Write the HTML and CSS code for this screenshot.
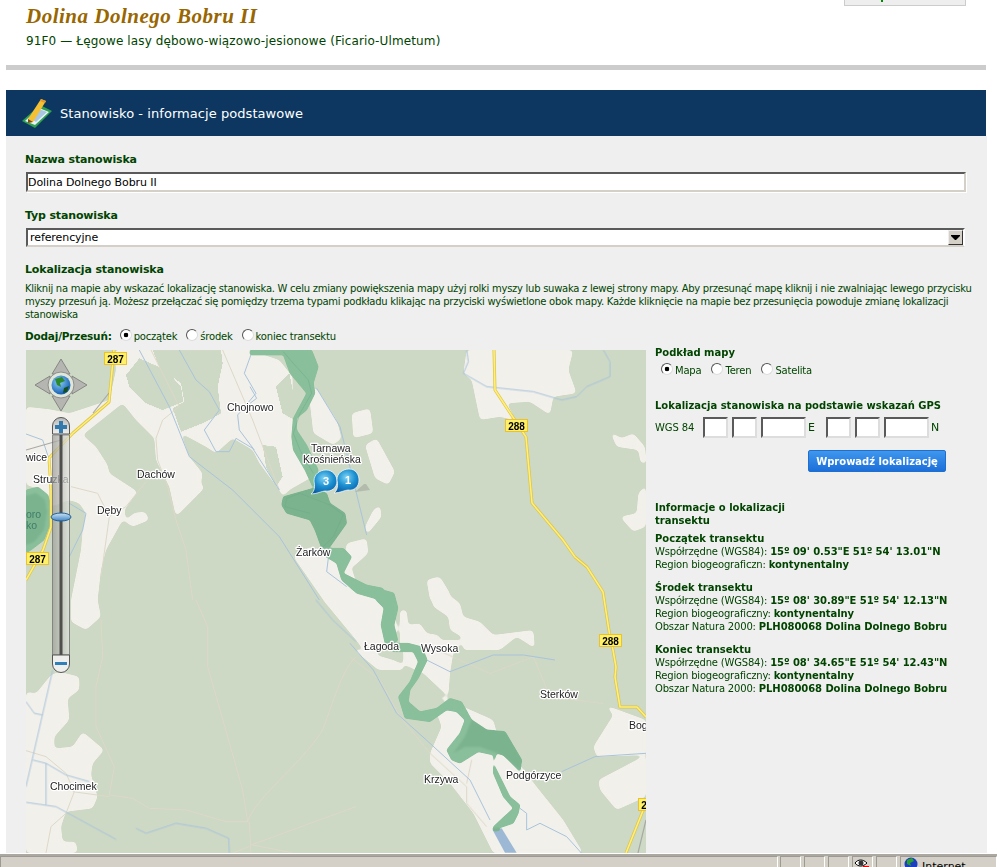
FILE: index.html
```html
<!DOCTYPE html>
<html lang="pl">
<head>
<meta charset="utf-8">
<title>Stanowisko</title>
<link rel="stylesheet" href="styles.css">
</head>
<body>
<header class="top">
  <div class="title-block">
    <h1 class="site-title">Dolina Dolnego Bobru II</h1>
    <p class="site-sub">91F0 — Łęgowe lasy dębowo-wiązowo-jesionowe (Ficario-Ulmetum)</p>
  </div>
  <div class="top-box"><span class="top-mark"></span></div>
</header>
<div class="rule"></div>
<div class="band">
  <svg class="band-icon" width="32" height="32" viewBox="0 0 32 32">
    <path d="M1 24 L19 8 L31 14 L14 31 Z" fill="#2fa04f"/>
    <path d="M4 24 L18 11 L28 15 L14 28 Z" fill="#eaf2f8"/>
    <path d="M9 21 L18 12 L26 15 L15 25 Z" fill="#a9c6e2"/>
    <path d="M7 22 L20 2 L25 4 L12 25 L7 26 Z" fill="#f5c033"/>
    <path d="M20 2 L25 4 L24 6 L19 4 Z" fill="#e59a2b"/>
    <path d="M7 22 L12 25 L7 26 Z" fill="#7b4a1f"/>
  </svg>
  <span class="band-text">Stanowisko - informacje podstawowe</span>
</div>
<main class="panel">
  <h2 class="field-label first">Nazwa stanowiska</h2>
  <input class="text-input" type="text" value="Dolina Dolnego Bobru II">
  <h2 class="field-label second">Typ stanowiska</h2>
  <div class="select-box"><span class="select-value">referencyjne</span><span class="select-btn"><svg width="9" height="5" viewBox="0 0 9 5"><path d="M0 0H9V1L5 5H4L0 1Z" fill="#000"/></svg></span></div>
  <h2 class="field-label third">Lokalizacja stanowiska</h2>
  <p class="help">Kliknij na mapie aby wskazać lokalizację stanowiska. W celu zmiany powiększenia mapy użyj rolki myszy lub suwaka z lewej strony mapy. Aby przesunąć mapę kliknij i nie zwalniając lewego przycisku<br>myszy przesuń ją. Możesz przełączać się pomiędzy trzema typami podkładu klikając na przyciski wyświetlone obok mapy. Każde kliknięcie na mapie bez przesunięcia powoduje zmianę lokalizacji<br>stanowiska</p>
  <div class="mode-row">
    <strong class="mode-label">Dodaj/Przesuń:</strong>
    <label class="opt"><input class="radio" type="radio" name="m" checked>początek</label>
    <label class="opt"><input class="radio" type="radio" name="m">środek</label>
    <label class="opt"><input class="radio" type="radio" name="m">koniec transektu</label>
  </div>
  <div class="columns">
    <svg class="map" width="620" height="503" viewBox="0 0 620 503">
      <defs>
        <filter id="smooth" x="-5%" y="-5%" width="110%" height="110%" color-interpolation-filters="sRGB">
          <feGaussianBlur stdDeviation="2"/>
          <feComponentTransfer><feFuncA type="linear" slope="8" intercept="-3.500"/></feComponentTransfer>
        </filter>
        <filter id="soft" x="-5%" y="-5%" width="110%" height="110%" color-interpolation-filters="sRGB">
          <feGaussianBlur stdDeviation=".8"/>
          <feComponentTransfer><feFuncA type="linear" slope="4" intercept="-1"/></feComponentTransfer>
        </filter>
        <radialGradient id="pin" cx="50%" cy="35%" r="65%"><stop offset="0" stop-color="#7fd4f5"/><stop offset=".55" stop-color="#1b8fd0"/><stop offset="1" stop-color="#0b5fa8"/></radialGradient>
        <radialGradient id="globe" cx="40%" cy="35%" r="70%"><stop offset="0" stop-color="#8fd0f5"/><stop offset="1" stop-color="#0c57b0"/></radialGradient>
        <linearGradient id="track" x1="0" x2="1" y1="0" y2="0"><stop offset="0" stop-color="#9c9c98"/><stop offset="1" stop-color="#dfe2dc"/></linearGradient>
        <linearGradient id="cap" x1="0" x2="0" y1="0" y2="1"><stop offset="0" stop-color="#b9bab7"/><stop offset="1" stop-color="#f0f0ee"/></linearGradient>
        <linearGradient id="handle" x1="0" x2="0" y1="0" y2="1"><stop offset="0" stop-color="#cfe3f5"/><stop offset="1" stop-color="#3f86c6"/></linearGradient>
      </defs>
      <rect class="forest" width="620" height="503"/>

      <g filter="url(#smooth)">
        <g class="light" transform="scale(.3333)">
          <path d="M0 170 70 178 130 190 190 170 250 150 270 60 265 0 670 0 760 30 800 80 800 200 800 280 840 340 860 380 790 420 770 440 760 420 700 340 680 300 620 265 570 310 540 290 465 250 490 320 530 370 525 400 535 415 450 500 430 410 390 330 385 265 330 210 290 160 170 255 210 290 245 345 250 370 335 425 295 480 300 510 325 488 358 485 370 510 320 530 290 510 240 600 225 660 215 750 225 800 180 840 135 815 135 750 165 600 170 540 180 490 160 460 130 450 75 470 50 420 0 405Z"/>
        </g>
        <g class="light" transform="translate(0,250) scale(.3333)">
          <path d="M0 275 30 280 75 225 100 215 160 230 160 270 125 295 130 360 85 410 85 445 140 440 170 395 235 450 200 490 195 525 215 590 200 625 120 635 105 680 110 725 150 725 155 759 0 759Z"/>
        </g>
        <g class="light" transform="translate(374,0) scale(.3333)">
          <path d="M200 0 190 70 215 90 240 210 300 200 340 210 340 195 320 160 390 155 450 195 460 140 530 130 505 60 520 0Z"/>
          <path d="M630 245 665 265 700 250 735 290 740 340 722 340 715 300 650 290Z"/>
          <path d="M738 405 715 430 710 490 660 500 700 545 738 530Z"/>
          <path d="M80 690 115 680 140 730 180 760 190 800 240 815 280 855 400 840 405 895 350 860 300 900 190 900 185 860 150 840 145 800 100 770Z"/>
          <path d="M0 780 20 780 25 825 60 820 80 850 115 855 140 900 0 900Z"/>
        </g>
        <g class="light" transform="translate(224,0) scale(.3333)">
          <path d="M175 120 200 115 260 210 275 265 250 285 190 250Z"/>
          <path d="M305 190 360 175 370 250 310 265Z"/>
          <path d="M345 285 380 265 435 365 415 405 375 385Z"/>
          <path d="M390 465 395 500 350 555 345 530 370 480Z"/>
          <path d="M290 580 350 565 355 610 310 650 280 640Z"/>
          <path d="M530 690 570 680 600 730 600 750 540 750Z"/>
          <path d="M130 620 180 590 300 640 320 700 420 750 220 750Z"/>
        </g>
        <g class="light">
          <path d="M297 250 364 250 372 280 345 310 330 290Z"/>
        </g>
        <g class="light" transform="translate(324,290) scale(.3333)">
          <path d="M0 20 85 90 160 90 160 20 215 0 340 0 310 40 300 100 295 170 220 100 130 60 60 40Z"/>
          <path d="M530 -10 550 25 515 -10Z"/>
          <path d="M250 170 300 170 260 220 275 260 240 340 240 370 300 430 370 520 430 640 700 640 640 540 560 440 510 375 460 350 430 240 340 200Z"/>
          <path d="M765 195 888 240 888 345 740 350 730 320 790 225Z"/>
          <path d="M888 345 745 420 750 450 800 510 888 470Z"/>
        </g>
      </g>
      <g class="forest-patch" filter="url(#smooth)" transform="scale(.3333)">
        <path d="M300 75 340 25 420 60 465 110 472 155 410 180 360 160 310 110Z"/>
        <path d="M380 0 585 0 590 40 575 110 585 190 540 215 465 245 440 175 475 155 465 100 400 50Z"/>
        <path d="M750 110 790 70 800 120 805 210 770 190Z"/>
        <path d="M710 285 750 290 770 380 750 410 720 350Z"/>
      </g>

      <g class="track" transform="translate(0,250) scale(.3333)">
        <path d="M210 260 230 170 225 60M210 260 210 380 265 500 250 585 320 595 370 625 480 630 600 665 665 665 650 570 605 410 545 200 545 80 510 0"/>
        <path d="M665 665C690 590 820 500 890 390 930 280 950 210 990 170"/>
        <path d="M670 740 620 759M675 735 990 620M680 735 800 759M670 665 675 759"/>
        <path d="M0 452 60 470 120 520 145 575 120 640 75 680 60 759M140 575 250 590"/>
      </g>
      <g class="track" transform="scale(.3333)">
        <path d="M375 0 460 170 410 210 390 265 395 330 425 410 450 510 480 600 500 750"/>
        <path d="M590 0 680 210 760 420"/>
        <path d="M135 410 215 430 250 500 225 680M360 395 300 470 250 500"/>
      </g>
      <g class="track" transform="translate(324,290) scale(.3333)">
        <path d="M0 50 90 120 150 230 240 340 350 440 350 490 410 560M240 20 420 100 550 50 600 170 760 190M365 360 350 430"/>
      </g>

      <g class="stream" transform="scale(.3333)">
        <path d="M340 0 430 170 490 320 620 420 760 560 880 750"/>
        <path d="M460 0 510 90 550 125 580 180 535 240 570 305 610 305 630 265 680 295 760 420"/>
        <path d="M680 0 655 70 690 130 635 195 640 240 685 300"/>
        <path d="M0 252 50 270 70 330M130 460 180 490 170 540 130 620"/>
      </g>
      <g class="stream" transform="translate(0,250) scale(.3333)">
        <path d="M80 210 0 560M0 305 25 340 50 345M20 480 60 490 120 525 190 545M60 490 60 615M0 607 90 620 270 718M330 685 360 700 450 670 540 685 608 715 610 759"/>
        <path d="M870 0 920 60 990 125"/>
      </g>
      <g class="stream" transform="translate(374,0) scale(.3333)">
        <path d="M200 0 205 35 190 70 260 110 400 125 485 150 530 140 560 110 630 80 630 35 610 0"/>
      </g>
      <g class="stream" transform="translate(224,0) scale(.3333)">
        <path d="M0 110 20 145 0 160M200 115 270 230 285 290 350 555"/>
        <path d="M235 625 230 665 290 710"/>
      </g>
      <g class="stream" transform="translate(324,290) scale(.3333)">
        <path d="M0 10 70 90 140 220 240 310 360 420 420 540M230 60 300 95 430 45 520 45 615 60"/>
        <path d="M635 395 735 350 888 340"/>
        <path d="M510 505 530 520 530 570 570 550 650 590 695 640"/>
      </g>

      <path class="water" transform="translate(324,290) scale(.3333)" d="M428 570 455 565 500 638 465 638Z"/>
      <g filter="url(#soft)">
        <path class="reserve" d="M0 140 12 137 22 145 26 160 25 172 18 190 5 200 0 203Z"/>
        <path class="reserve-dark" d="M0 146 10 143 19 150 21 162 18 180 8 192 0 195Z"/>
        <g class="reserve" transform="translate(224,0) scale(.3333)">
          <path d="M0 0 185 0 205 50 190 100 195 130 170 180 140 205 140 240 170 285 205 360 190 415 165 360 130 300 125 260 130 205 170 130 120 70 100 15 0 15Z"/>
          <path d="M280 595 305 620 280 670 350 705 400 715 390 750 320 730 275 690 260 640 210 610 215 595Z"/>
        </g>
        <path class="reserve" d="M350 238 368 243 372 258 368 275 372 291 359 293 355 275 358 258 350 250Z"/>
        <g class="reserve-dark" transform="translate(224,0) scale(.3333)">
          <path d="M100 440 190 415 230 430 240 460 285 490 290 520 240 590 215 595 195 540 180 510 110 490 95 465Z"/>
        </g>
        <g class="reserve" transform="translate(324,290) scale(.3333)">
          <path d="M105 0 120 10 175 10 215 20 232 60 205 115 180 150 175 185 210 215 260 205 300 175 335 185 365 240 410 270 465 275 515 360 510 395 500 385 460 345 440 340 430 370 480 470 510 495 505 520 490 550 430 570 430 560 490 505 460 470 430 400 430 345 385 335 330 370 305 360 290 330 330 280 345 240 320 215 290 210 240 245 165 235 145 170 180 125 205 65 190 35 130 35 105 20Z"/>
        </g>
        <g class="reserve-dark" transform="translate(324,290) scale(.3333)">
          <path d="M310 340 345 320 390 320 430 335 460 345 510 390 515 360 465 275 410 270 365 240 345 290Z"/>
          <path d="M428 566 446 562 450 572 430 574Z"/>
        </g>
      </g>
      <g class="reserve-line" transform="translate(224,0) scale(.3333)">
        <path d="M100 5 130 40 175 90 185 130 150 190 130 250 150 300 190 370M110 445 150 430 240 465 280 495 250 560 220 590M110 445 105 470 180 490"/>
      </g>

      <g class="road-edge"><path d="M88 0 83 52 47 83 23 108 25 140 25 177 17 200 0 230"/></g>
      <path class="grey-road" d="M83 43 67 63 M0 100 35 90"/>
      <g class="road-fill"><path d="M88 0 83 52 47 83 23 108 25 140 25 177 17 200 0 230"/></g>
      <g class="road-edge"><path d="M468 0 469 40 500 87 506 153 537 190 549 207 561 217 577 242 584 287 587 300 590 317 589 327 594 357 611 357 620 367M620 453 600 503"/></g>
      <g class="road-fill"><path d="M468 0 469 40 500 87 506 153 537 190 549 207 561 217 577 242 584 287 587 300 590 317 589 327 594 357 611 357 620 367M620 453 600 503"/></g>
      <path class="grey-road" d="M620 470 612 503"/>

      <g class="labels">
        <text x="201" y="61">Chojnowo</text>
        <text x="111" y="128">Dachów</text>
        <text x="71" y="164">Dęby</text>
        <text x="0" y="111">wice</text>
        <text x="285" y="102">Tarnawa</text>
        <text x="277" y="113">Krośnieńska</text>
        <text x="270" y="206">Żarków</text>
        <text x="338" y="300">Łagoda</text>
        <text x="395" y="302">Wysoka</text>
        <text x="514" y="348">Sterków</text>
        <text x="603" y="379">Bog</text>
        <text x="398" y="433">Krzywa</text>
        <text x="480" y="429">Podgórzyce</text>
        <text x="24" y="440">Chocimek</text>
        <text x="7" y="133">Struzka</text>
      </g>
      <text class="label-muted" x="0" y="168">oro</text>
      <text class="label-muted" x="0" y="179">ko</text>

      <g class="sign"><rect x="78.500" y="2.500" width="22" height="12"/><text x="89.500" y="12.500">287</text></g>
      <g class="sign"><rect x="0.500" y="202.500" width="22" height="12"/><text x="11.500" y="212.500">287</text></g>
      <g class="sign"><rect x="479.500" y="69.500" width="22" height="12"/><text x="490.500" y="79.500">288</text></g>
      <g class="sign"><rect x="573.500" y="284.500" width="22" height="12"/><text x="584.500" y="294.500">288</text></g>
      <g class="sign"><rect x="612.500" y="448.500" width="22" height="12"/><text x="623.500" y="458.500">288</text></g>

      <g class="pins">
        <path class="pin-shadow" d="M329 142 338 134H340L344 140Z"/>
        <path fill="url(#pin)" stroke="#fff" stroke-width=".7" d="M285 144C289 141 289 136 288 131 288 124 294 120 300 120 307 120 311 126 311 131 311 138 305 142 299 141 296 141 291 144 285 144Z"/>
        <path fill="url(#pin)" stroke="#fff" stroke-width=".7" d="M308 143C312 140 312 135 311 130 311 123 317 119 323 119 330 119 333 125 333 130 333 137 328 141 322 140 319 140 314 143 308 143Z"/>
        <text class="pin-num" x="300" y="135">3</text>
        <text class="pin-num" x="322" y="134">1</text>
      </g>

      <g class="nav">
        <path class="nav-arrow" d="M35 9 44 24H26ZM35 61 26 46H44ZM9 35 24 26V44ZM61 35 46 44V26Z"/>
        <circle cx="35" cy="35" r="13" fill="#dfe6da" stroke="#8e8e8a"/>
        <circle cx="35" cy="35" r="9.500" fill="url(#globe)"/>
        <path d="M29 29 36 27 39 31 34 33 35 37 31 35Z" fill="#2c8a2c"/>
        <path d="M38 38 43 36 41 42 37 43Z" fill="#14501f"/>
      </g>
      <g class="zoom">
        <path class="zoom-track" d="M26.500 85H43.500V305H26.500Z"/>
        <rect x="33.500" y="85" width="3" height="220" fill="#4f4f4d"/>
        <path class="zoom-cap" d="M26.500 84V76A8.500 8.500 0 0 1 43.500 76V84Z" fill="url(#cap)"/>
        <path d="M33 71H37V75H41V79H37V83H33V79H29V75H33Z" fill="#3279ad"/>
        <ellipse cx="35" cy="167" rx="10" ry="4" fill="url(#handle)" stroke="#1f5f96"/>
        <path class="zoom-cap" d="M26.500 305H43.500V314A8.500 8.500 0 0 1 26.500 314Z" fill="#eeeeec"/>
        <rect x="29" y="312" width="12" height="3" fill="#2f7fb8"/>
      </g>
    </svg>

    <aside class="side">
      <h3 class="side-head">Podkład mapy</h3>
      <div class="base-row">
        <label class="opt"><input class="radio" type="radio" name="b" checked>Mapa</label>
        <label class="opt"><input class="radio" type="radio" name="b">Teren</label>
        <label class="opt"><input class="radio" type="radio" name="b">Satelita</label>
      </div>
      <h3 class="side-head gps-head">Lokalizacja stanowiska na podstawie wskazań GPS</h3>
      <div class="gps-row">
        <span class="gps-label">WGS 84</span>
        <input class="gps-box small" type="text"><input class="gps-box small" type="text"><input class="gps-box wide" type="text"><span class="gps-dir">E</span>
        <input class="gps-box small" type="text"><input class="gps-box small" type="text"><input class="gps-box wide" type="text"><span class="gps-dir">N</span>
      </div>
      <div class="btn-row"><button class="btn" type="button">Wprowadź lokalizację</button></div>
      <h3 class="side-head info-head">Informacje o lokalizacji<br>transektu</h3>
      <section class="info first-info">
        <h3 class="side-head">Początek transektu</h3>
        <p>Współrzędne (WGS84): <b>15º 09' 0.53"E 51º 54' 13.01"N</b></p>
        <p>Region biogeograficzn: <b>kontynentalny</b></p>
      </section>
      <section class="info">
        <h3 class="side-head">Środek transektu</h3>
        <p>Współrzędne (WGS84): <b>15º 08' 30.89"E 51º 54' 12.13"N</b></p>
        <p>Region biogeograficzny: <b>kontynentalny</b></p>
        <p>Obszar Natura 2000: <b>PLH080068 Dolina Dolnego Bobru</b></p>
      </section>
      <section class="info">
        <h3 class="side-head">Koniec transektu</h3>
        <p>Współrzędne (WGS84): <b>15º 08' 34.65"E 51º 54' 12.43"N</b></p>
        <p>Region biogeograficzny: <b>kontynentalny</b></p>
        <p>Obszar Natura 2000: <b>PLH080068 Dolina Dolnego Bobru</b></p>
      </section>
    </aside>
  </div>
</main>
<footer class="status">
  <span class="cell grow"></span>
  <span class="cell c21"></span>
  <span class="cell c21"></span>
  <span class="cell c21"></span>
  <span class="cell c21 eye"><svg width="16" height="12" viewBox="0 0 16 12"><path d="M1 5C4 1 9 1 13 5 9 9 4 9 1 5Z" fill="#fff" stroke="#000"/><circle cx="7" cy="5" r="2.500" fill="#333"/><rect x="9" y="8" width="6" height="4" fill="#e00"/></svg></span>
  <span class="cell c21"></span>
  <span class="cell net"><svg width="14" height="14" viewBox="0 0 14 14"><circle cx="7" cy="7" r="6.500" fill="#1c3fc0"/><path d="M3 3 8 1 10 4 6 6 7 9 3 7Z" fill="#27a327"/></svg><span class="net-text">Internet</span></span>
</footer>
</body>
</html>
```

FILE: styles.css
```css
* { box-sizing: border-box; }
html, body { margin: 0; padding: 0; }
body {
  width: 997px;
  height: 867px;
  overflow: hidden;
  display: flex;
  flex-direction: column;
  background: #fff;
  color: #004400;
  font-family: "DejaVu Sans", sans-serif;
  font-size: 11px;
}
.top { height: 65px; flex: none; display: flex; padding: 0 31px 0 26px; }
.title-block { flex: 1; }
.site-title {
  margin: 4px 0 0;
  font: italic bold 21px/24px "Liberation Serif", serif;
  color: #996600;
  letter-spacing: .5px;
  height: 24px;
}
.site-sub { margin: 5px 0 0; font-size: 12px; line-height: 16px; letter-spacing: .13px; }
.top-box { width: 122px; height: 6px; background: #eee; border: 1px solid #ccc; border-top: 0; }
.top-mark { display: block; width: 2px; height: 2px; background: #080; margin-left: 36px; }
.rule { flex: none; width: 980px; height: 5px; margin-left: 6px; background: #ccc; }
.band {
  flex: none;
  width: 980px;
  height: 46px;
  margin: 20px 0 0 6px;
  background: #0d3761;
  display: flex;
  align-items: center;
  padding-left: 15px;
  color: #fff;
}
.band-icon { flex: none; margin-right: 7px; }
.band-text { font-size: 13px; letter-spacing: .06px; }
.panel {
  flex: 1;
  min-height: 0;
  width: 981px;
  margin-left: 6px;
  padding: 0 21px 0 20px;
  background: #efefef;
  overflow: hidden;
}
.field-label { margin: 0 0 0 -1px; font-size: 11px; line-height: 14px; font-weight: bold; letter-spacing: -.15px; }
.field-label.first { padding-top: 17px; height: 30px; }
.field-label.second { margin-top: 17px; }
.field-label.third { margin-top: 16px; }
.text-input {
  display: block;
  width: 940px;
  height: 20px;
  margin-top: 6px;
  padding: 0;
  background: #fff;
  border: 2px solid;
  border-color: #5a5a5a #d4d0c8 #d4d0c8 #5a5a5a;
  box-shadow: 1px 1px 0 #fff;
  color: #000;
  font: 11px/16px "DejaVu Sans", sans-serif;
  letter-spacing: -.08px;
  outline: 0;
}
.select-box {
  width: 939px;
  height: 19px;
  margin-top: 5px;
  padding-left: 2px;
  background: #fff;
  border: 2px solid;
  border-color: #5a5a5a #fff #d4d0c8 #5a5a5a;
  display: flex;
  align-items: center;
  justify-content: space-between;
  color: #000;
}
.select-value { letter-spacing: -.08px; }
.select-btn {
  width: 15px;
  height: 15px;
  background: #d4d0c8;
  border: 1px solid;
  border-color: #eee #333 #333 #eee;
  display: flex;
  align-items: center;
  justify-content: center;
}
.help { margin: 5px 0 0 -1px; font-size: 10px; line-height: 13px; letter-spacing: -.27px; white-space: nowrap; }
.mode-row { margin: 7px 0 0 -1px; height: 16px; display: flex; align-items: center; }
.mode-label { font-size: 10.500px; margin-right: 8px; letter-spacing: -.2px; }
.opt { display: inline-flex; align-items: center; margin-right: 9px; font-size: 10px; letter-spacing: -.2px; }
.radio {
  appearance: none;
  width: 12px;
  height: 12px;
  margin: 0 2px 3px 0;
  border-radius: 50%;
  background: #fff;
  border: 1px solid;
  border-color: #555 #ddd #ddd #555;
  flex: none;
}
.radio:checked { background: radial-gradient(circle, #000 0 2px, #fff 2.6px); }
.columns { display: flex; margin-top: 6px; }
.map { flex: none; display: block; }
.forest { fill: #cdd9c5; }
.light path { fill: #f2f0ea; }
.forest-patch path { fill: #cdd9c5; }
.track path { fill: none; stroke: #ddd8c8; stroke-width: 3; }
.stream path { fill: none; stroke: #a8c3dc; stroke-width: 3; stroke-linejoin: round; }
.water { fill: #9db8d4; }
.reserve, .reserve path { fill: #8abf9b; }
.reserve-dark path, .reserve-dark { fill: #7bb38e; }
.reserve-line path { fill: none; stroke: #6ba88a; stroke-width: 2; opacity: .7; }
.road-edge path { fill: none; stroke: #dcc445; stroke-width: 3; stroke-linejoin: round; }
.road-fill path { fill: none; stroke: #ffee78; stroke-width: 1.600; stroke-linejoin: round; }
.grey-road { fill: none; stroke: #a8a8a4; stroke-width: 1.200; }
.labels text { font: 10.500px "Liberation Sans", sans-serif; fill: #222; paint-order: stroke; stroke: #fff; stroke-width: 2.500px; stroke-linejoin: round; }
.label-muted { font: 10.500px "Liberation Sans", sans-serif; fill: #3e7d68; }
.sign rect { fill: #fff06a; stroke: #ecc22c; }
.sign text { font: bold 10px "Liberation Sans", sans-serif; fill: #000; text-anchor: middle; }
.pin-shadow { fill: #777; opacity: .3; }
.pin-num { font: bold 11px "Liberation Sans", sans-serif; fill: #fff; text-anchor: middle; }
.nav-arrow { fill: #b5b5b1; stroke: #777; stroke-width: .8; }
.zoom-track { fill: url(#track); stroke: #666; opacity: .72; }
.zoom-cap { stroke: #555; }
.side { flex: 1; min-width: 0; margin: -4px 0 0 9px; white-space: nowrap; }
.side-head { margin: 0; font-size: 10px; line-height: 13px; font-weight: bold; }
.base-row { margin: 4px 0 0 6px; height: 15px; display: flex; align-items: center; }
.base-row .opt { margin-right: 10px; }
.gps-head { margin-top: 21px; }
.gps-row { margin-top: 5px; height: 21px; display: flex; align-items: center; }
.gps-label { width: 48px; font-size: 10px; letter-spacing: -.1px; }
.gps-box { height: 21px; padding: 0; background: #fff; border: 2px solid; border-color: #5a5a5a #ddd #ddd #5a5a5a; margin-right: 4px; }
.gps-box.small { width: 25px; }
.gps-box.wide { width: 45px; }
.gps-dir { width: 18px; margin-left: -2px; }
.btn-row { margin-top: 12px; padding-left: 153px; }
.btn {
  width: 138px;
  height: 22px;
  padding: 0;
  border: 1px solid #1f6fd0;
  border-radius: 2px;
  background: linear-gradient(#3f97ee, #1c6fd9);
  color: #fff;
  font: bold 10px "DejaVu Sans", sans-serif;
}
.info-head { margin-top: 29px; }
.info { margin-top: 10px; }
.info.first-info { margin-top: 5px; }
.info p { margin: 0; font-size: 10px; line-height: 13px; letter-spacing: -.18px; }
.info b { letter-spacing: -.07px; }
.status {
  flex: none;
  height: 14px;
  background: #d4d0c8;
  border-top: 1px solid #fff;
  box-shadow: inset 0 2px 0 #aaa8a0;
  display: flex;
  padding-top: 2px;
  overflow: hidden;
  color: #000;
}
.cell { height: 20px; border: 1px solid #9c9a92; border-right-color: #fff; border-bottom: 0; margin-right: 3px; flex: none; }
.cell.grow { flex: 1; margin-right: 2px; }
.cell.c21 { width: 21px; }
.cell.eye { padding: 1px 0 0 1px; }
.cell.net { width: 97px; margin-right: 0; display: flex; padding-left: 3px; gap: 4px; }
.net-text { font: 11px/19px "DejaVu Sans", sans-serif; }
```
